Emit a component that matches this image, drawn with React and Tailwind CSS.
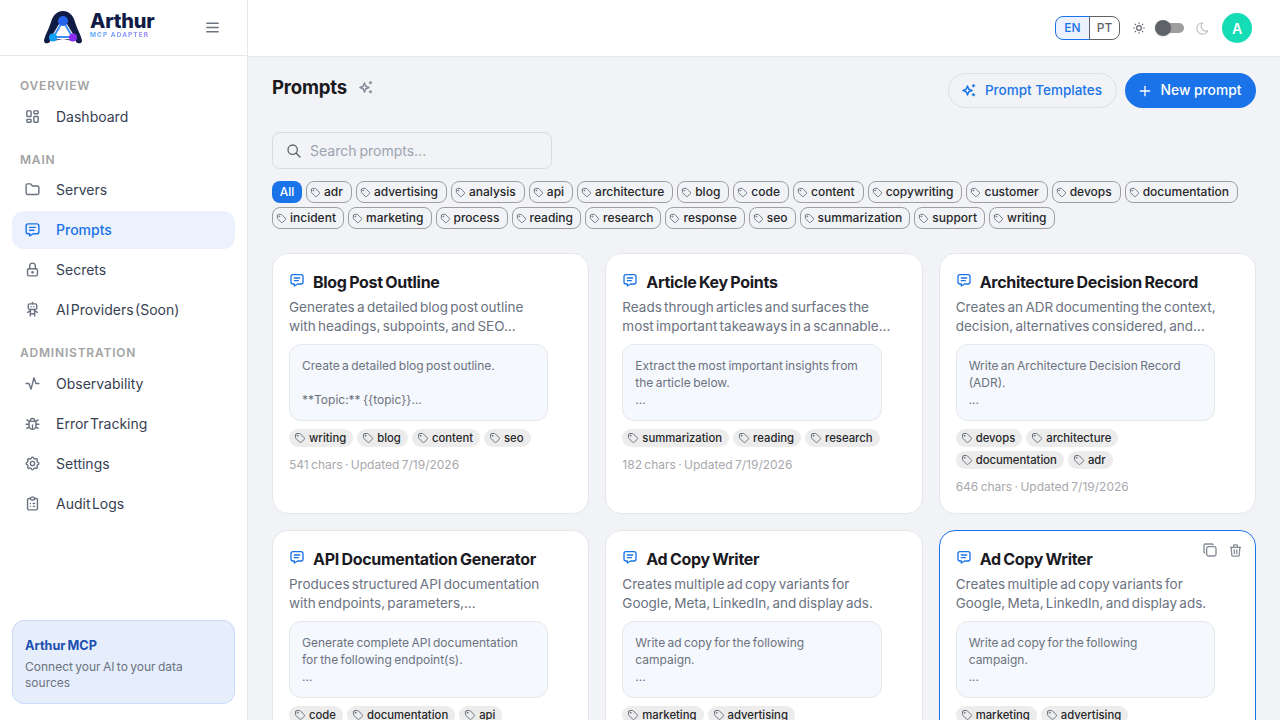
import React from "react";
import { TbLayoutDashboard, TbFolder, TbMessage, TbLock, TbRobot, TbActivity, TbBug, TbSettings, TbClipboardList, TbTag, TbSun, TbMoon, TbCopy, TbTrash, TbMenu2, TbSearch, TbPlus } from "react-icons/tb";

const nav = [
  { head: "OVERVIEW", items: [["Dashboard", TbLayoutDashboard]] },
  { head: "MAIN", items: [["Servers", TbFolder], ["Prompts", TbMessage, true], ["Secrets", TbLock], ["AI Providers (Soon)", TbRobot]] },
  { head: "ADMINISTRATION", items: [["Observability", TbActivity], ["Error Tracking", TbBug], ["Settings", TbSettings], ["Audit Logs", TbClipboardList]] },
];
const filters = [
  ["adr","advertising","analysis","api","architecture","blog","code","content","copywriting","customer","devops","documentation"],
  ["incident","marketing","process","reading","research","response","seo","summarization","support","writing"],
];
const cards = [
  { t: "Blog Post Outline", d: ["Generates a detailed blog post outline", "with headings, subpoints, and SEO..."], p: ["Create a detailed blog post outline.", "\u00a0", "**Topic:** {{topic}}..."], tags: ["writing","blog","content","seo"], m: "541 chars · Updated 7/19/2026" },
  { t: "Article Key Points", d: ["Reads through articles and surfaces the", "most important takeaways in a scannable..."], p: ["Extract the most important insights from", "the article below.", "..."], tags: ["summarization","reading","research"], m: "182 chars · Updated 7/19/2026" },
  { t: "Architecture Decision Record", d: ["Creates an ADR documenting the context,", "decision, alternatives considered, and..."], p: ["Write an Architecture Decision Record", "(ADR).", "..."], tags: ["devops","architecture","documentation","adr"], m: "646 chars · Updated 7/19/2026" },
  { t: "API Documentation Generator", d: ["Produces structured API documentation", "with endpoints, parameters,..."], p: ["Generate complete API documentation", "for the following endpoint(s).", "..."], tags: ["code","documentation","api"], m: "" },
  { t: "Ad Copy Writer", d: ["Creates multiple ad copy variants for", "Google, Meta, LinkedIn, and display ads."], p: ["Write ad copy for the following", "campaign.", "..."], tags: ["marketing","advertising"], m: "" },
  { t: "Ad Copy Writer", d: ["Creates multiple ad copy variants for", "Google, Meta, LinkedIn, and display ads."], p: ["Write ad copy for the following", "campaign.", "..."], tags: ["marketing","advertising"], m: "", hover: true },
];

function Sparkle({ size = 15, className = "" }) {
  return (
    <svg width={size} height={size} viewBox="0 0 15 15" className={className} fill="none" stroke="currentColor">
      <path d="M5.5 3 L6.8 6.2 L10 7.5 L6.8 8.8 L5.5 12 L4.2 8.8 L1 7.5 L4.2 6.2 Z" strokeWidth="1.5" strokeLinejoin="round" />
      <path d="M11.5 1.2 L13 2.7 L11.5 4.2 L10 2.7 Z" fill="currentColor" strokeWidth="0.6" strokeLinejoin="round" />
      <path d="M11.5 10.2 L13 11.7 L11.5 13.2 L10 11.7 Z" fill="currentColor" strokeWidth="0.6" strokeLinejoin="round" />
    </svg>
  );
}

function Logo() {
  return (
    <svg width="38" height="33" viewBox="0 0 38 33" className="shrink-0">
      <path d="M0 29.5 C1 24 5 18 7 11 C9 4 13 0 19 0 C25 0 29 4 31 11 C33 18 37 24 38 29.5 C38 33 34 33 32 31 L19 28 L6 31 C4 33 0 33 0 29.5 Z" fill="#101c45" />
      <path d="M19 10 L29 26.5 L9 26.5 Z" fill="#ffffff" stroke="#ffffff" strokeWidth="3.5" strokeLinejoin="round" />
      <rect x="6" y="29.5" width="26" height="3.5" fill="#ffffff" />
      <path d="M19 10 L28.5 26 L9.5 26 Z" fill="#ffffff" stroke="#3f8df5" strokeWidth="2" strokeLinejoin="round" />
      <circle cx="19" cy="10" r="5" fill="#2563eb" />
      <circle cx="9" cy="26.5" r="4" fill="#10a0f5" />
      <circle cx="29" cy="26.5" r="4" fill="#8b2cf5" />
    </svg>
  );
}

function Sidebar() {
  return (
    <aside className="w-[248px] shrink-0 h-full bg-white border-r border-[#e5e7eb] flex flex-col">
      <div className="h-[56px] shrink-0 border-b border-[#e5e7eb] flex items-center pl-[44px] pr-[26px] justify-between">
        <div className="flex items-center gap-[8px]">
          <Logo />
          <div className="flex flex-col -mt-[5px]">
            <span className="text-[20px] leading-[21px] font-extrabold text-[#101c45] tracking-[-0.2px]">Arthur</span>
            <span className="text-[6.5px] leading-[7px] font-bold tracking-[1.05px] [word-spacing:0px] bg-linear-to-r from-[#4fa8f8] to-[#9a7cf7] bg-clip-text text-transparent">MCP ADAPTER</span>
          </div>
        </div>
        <TbMenu2 size={17} className="text-[#6b7280]" />
      </div>
      <nav className="flex-1 px-3 pt-[22px]">
        {nav.map((s) => (
          <div key={s.head} className="mb-[14.5px]">
            <div className="px-2 h-[16px] text-[12px] leading-[16px] font-semibold tracking-[0.8px] text-[#a3a3a3]">{s.head}</div>
            <div className="flex flex-col mt-[3px]">
              {s.items.map(([label, Icon, active]) => (
                <div key={label} className={"h-[38px] mb-[2px] rounded-xl flex items-center gap-[15px] pl-[12px] text-[14px] [word-spacing:-2.5px] " + (active ? "bg-[#ebf2fd] text-[#1a73e8] font-medium" : "text-[#374151]")}>
                  <Icon size={17} className={active ? "text-[#1a73e8]" : "text-[#6b7280]"} />
                  <span>{label}</span>
                </div>
              ))}
            </div>
          </div>
        ))}
      </nav>
      <div className="mx-3 mb-[16px] h-[84px] rounded-xl bg-[#e6eefb] border border-[#c9dafa] px-3 pt-[15px]">
        <div className="text-[12.7px] leading-[20px] font-bold text-[#1d4fb0]">Arthur MCP</div>
        <div className="mt-[3px] text-[12px] leading-[16px] text-[#6b7280]">Connect your AI to your data sources</div>
      </div>
    </aside>
  );
}

function Card({ c }) {
  return (
    <div className={"relative bg-white rounded-2xl border px-4 pt-4 pb-[18px] self-stretch " + (c.hover ? "border-[#1a73e8]" : "border-[#e5e7eb]")}>
      {c.hover && (
        <div className="absolute top-[11px] right-[12px] flex items-center gap-[10px] text-[#858b94]">
          <TbCopy size={16} />
          <TbTrash size={15} />
        </div>
      )}
      <div className="flex items-center gap-[8px] h-[20px] mt-[2px]">
        <TbMessage size={16} className="text-[#1a73e8] -mt-1 shrink-0" />
        <h3 className="text-[16px] leading-[20px] font-bold text-[#1a1a1f] tracking-[-0.3px]">{c.t}</h3>
      </div>
      <div className="mt-[6px] mr-6 text-[13.5px] leading-[19px] text-[#6b7280] whitespace-nowrap [word-spacing:-1.5px]">
        {c.d.map((l, i) => <div key={i}>{l}</div>)}
      </div>
      <div className="mr-6 mt-[8px] rounded-xl bg-[#f5f8fd] border border-[#e5e7eb] px-3 pt-[12px] pb-[12px] text-[12px] leading-[17px] text-[#6b7280]">
        {c.p.map((l, i) => <div key={i}>{l}</div>)}
      </div>
      <div className="mr-6 mt-[8px] flex flex-wrap gap-x-[4px] gap-y-[4px]">
        {c.tags.map((t) => (
          <span key={t} className="h-[18px] rounded-full bg-[#ececec] pl-[5px] pr-[7px] flex items-center gap-[3px] text-[11.3px] font-medium text-[#27272a]">
            <TbTag size={12} className="text-[#6b7280]" />{t}
          </span>
        ))}
      </div>
      {c.m && <div className="mt-[10px] text-[12px] leading-[16px] text-[#a8a8ad]">{c.m}</div>}
    </div>
  );
}

export default function App() {
  return (
    <div className="h-screen w-screen overflow-hidden flex bg-[#f1f3f6] [font-family:Inter,'Noto_Sans',sans-serif] [word-spacing:-1px]">
      <Sidebar />
      <div className="flex-1 min-w-0 h-full flex flex-col">
        <header className="h-[57px] shrink-0 bg-white border-b border-[#e5e7eb] flex items-center justify-end pr-[28px]">
          <div className="flex h-[24px] text-[12px] font-medium">
            <span className="w-[35px] flex items-center justify-center rounded-l-lg border border-[#1a73e8] bg-[#ebf2fd] text-[#1a73e8]">EN</span>
            <span className="w-[31px] -ml-px flex items-center justify-center rounded-r-lg border border-[#5f6368] text-[#5f6368]">PT</span>
          </div>
          <TbSun size={14} className="ml-[12px] text-[#5f6368]" />
          <div className="relative ml-[9px] w-[29px] h-[10px] rounded-full bg-[#9e9e9e]">
            <div className="absolute left-0 top-[-3px] w-[16px] h-[16px] rounded-full bg-[#5f6368] shadow" />
          </div>
          <TbMoon size={15} className="ml-[11px] text-[#c4c4c4]" />
          <div className="ml-[12px] w-[30px] h-[30px] rounded-full bg-[#14dcb4] text-white text-[14px] font-semibold flex items-center justify-center">A</div>
        </header>
        <main className="flex-1 min-h-0 overflow-hidden pl-[24px] pr-[24px] pt-[16px]">
          <div className="flex items-start justify-between h-[59px]">
            <div className="flex items-center gap-[12px]">
              <h1 className="text-[18.6px] leading-[28px] font-bold text-[#1a1a1f] tracking-[-0.2px]">Prompts</h1>
              <Sparkle size={15} className="text-[#858b94]" />
            </div>
            <div className="flex items-center gap-[8px]">
              <button className="h-[35px] w-[169px] pr-[1px] rounded-full border border-[#dcdfe4] flex items-center justify-center gap-[8px] text-[13.5px] font-medium text-[#1a73e8]">
                <Sparkle size={15} />Prompt Templates
              </button>
              <button className="h-[35px] w-[131px] pr-[3px] rounded-full bg-[#1a73e8] flex items-center justify-center gap-[8px] text-[13.8px] font-medium text-white">
                <TbPlus size={16} />New prompt
              </button>
            </div>
          </div>
          <div className="w-[280px] h-[37px] rounded-lg border border-[#d8dbe0] flex items-center gap-[8px] pl-[13px] text-[14px] text-[#9ca3af]">
            <TbSearch size={16} className="text-[#5f6368]" />
            <span>Search prompts...</span>
          </div>
          <div className="mt-[12px] flex flex-col gap-[4px]">
            <div className="flex gap-[4px]">
              <span className="h-[22px] w-[30px] rounded-lg bg-[#1a73e8] text-white text-[12px] font-medium flex items-center justify-center">All</span>
              {filters[0].map((f) => (
                <span key={f} className="h-[22px] rounded-lg border border-[#9e9ea3] pl-[3px] pr-[8px] flex items-center gap-[3px] text-[12px] font-medium text-[#27272a]">
                  <TbTag size={11} className="text-[#6b7280]" />{f}
                </span>
              ))}
            </div>
            <div className="flex gap-[4px]">
              {filters[1].map((f) => (
                <span key={f} className="h-[22px] rounded-lg border border-[#9e9ea3] pl-[3px] pr-[7px] flex items-center gap-[3px] text-[12px] font-medium text-[#27272a]">
                  <TbTag size={11} className="text-[#6b7280]" />{f}
                </span>
              ))}
            </div>
          </div>
          <div className="mt-[24px] grid grid-cols-3 gap-[16px]">
            {cards.map((c, i) => <Card key={i} c={c} />)}
          </div>
        </main>
      </div>
    </div>
  );
}
